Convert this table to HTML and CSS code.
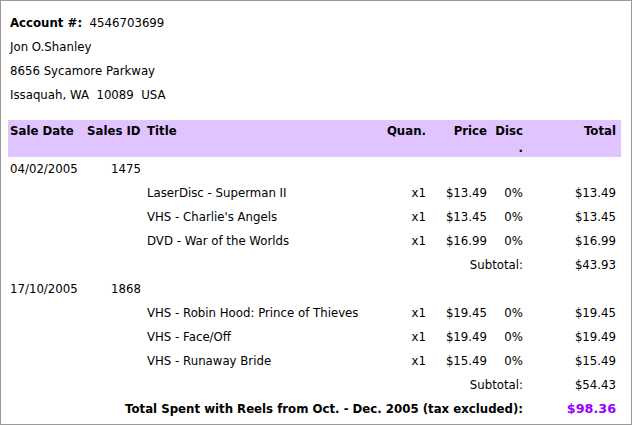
FILE: index.html
```html
<!DOCTYPE html>
<html>
<head>
<meta charset="utf-8">
<link rel="stylesheet" href="styles.css">
</head>
<body>
<div class="page">
  <div class="info">
    <div class="line"><span class="label">Account #:</span>&nbsp;&nbsp;4546703699</div>
    <div class="line">Jon O.Shanley</div>
    <div class="line">8656 Sycamore Parkway</div>
    <div class="line">Issaquah, WA&nbsp;&nbsp;10089&nbsp;&nbsp;USA</div>
  </div>
  <table class="sales">
    <colgroup>
      <col class="w-date"><col class="w-id"><col class="w-title"><col class="w-qty"><col class="w-price"><col class="w-disc"><col class="w-total">
    </colgroup>
    <thead>
      <tr>
        <th class="c-date">Sale Date</th>
        <th class="c-idh">Sales ID</th>
        <th class="c-title">Title</th>
        <th class="c-qty">Quan.</th>
        <th class="c-price">Price</th>
        <th class="c-disc">Disc<br>.</th>
        <th class="c-total">Total</th>
      </tr>
    </thead>
    <tbody>
      <tr><td class="c-date">04/02/2005</td><td class="c-id">1475</td><td></td><td></td><td></td><td></td><td></td></tr>
      <tr><td></td><td></td><td class="c-title">LaserDisc - Superman II</td><td class="c-qty">x1</td><td class="c-price">$13.49</td><td class="c-disc">0%</td><td class="c-total">$13.49</td></tr>
      <tr><td></td><td></td><td class="c-title">VHS - Charlie's Angels</td><td class="c-qty">x1</td><td class="c-price">$13.45</td><td class="c-disc">0%</td><td class="c-total">$13.45</td></tr>
      <tr><td></td><td></td><td class="c-title">DVD - War of the Worlds</td><td class="c-qty">x1</td><td class="c-price">$16.99</td><td class="c-disc">0%</td><td class="c-total">$16.99</td></tr>
      <tr><td></td><td></td><td colspan="4" class="c-disc">Subtotal:</td><td class="c-total">$43.93</td></tr>
      <tr><td class="c-date">17/10/2005</td><td class="c-id">1868</td><td></td><td></td><td></td><td></td><td></td></tr>
      <tr><td></td><td></td><td class="c-title">VHS - Robin Hood: Prince of Thieves</td><td class="c-qty">x1</td><td class="c-price">$19.45</td><td class="c-disc">0%</td><td class="c-total">$19.45</td></tr>
      <tr><td></td><td></td><td class="c-title">VHS - Face/Off</td><td class="c-qty">x1</td><td class="c-price">$19.49</td><td class="c-disc">0%</td><td class="c-total">$19.49</td></tr>
      <tr><td></td><td></td><td class="c-title">VHS - Runaway Bride</td><td class="c-qty">x1</td><td class="c-price">$15.49</td><td class="c-disc">0%</td><td class="c-total">$15.49</td></tr>
      <tr><td></td><td></td><td colspan="4" class="c-disc">Subtotal:</td><td class="c-total">$54.43</td></tr>
      <tr class="grand"><td colspan="6" class="c-disc">Total Spent with Reels from Oct. - Dec. 2005 (tax excluded):</td><td class="c-total grand-amt">$98.36</td></tr>
    </tbody>
  </table>
</div>
</body>
</html>
```
FILE: styles.css
```css
html, body {
  margin: 0;
  padding: 0;
  background: #fff;
}
body {
  font-family: "DejaVu Sans", Verdana, sans-serif;
  font-size: 11.75px;
  color: #000;
}
.page {
  box-sizing: border-box;
  width: 632px;
  height: 425px;
  border: 1px solid #999;
  padding: 10px 10px 0 7px;
}
.info {
  margin-left: 2px;
  margin-bottom: 13px;
}
.line {
  line-height: 24px;
  height: 24px;
  white-space: nowrap;
}
.label {
  font-weight: bold;
}
.sales {
  width: 613px;
  table-layout: fixed;
  border-collapse: collapse;
  border-spacing: 0;
}
.w-date { width: 77px; }
.w-id { width: 60px; }
.w-title { width: 238px; }
.w-qty { width: 46px; }
.w-price { width: 61px; }
.w-disc { width: 35px; }
.w-total { width: 96px; }
.sales th {
  background: #e0c4ff;
  font-weight: bold;
  line-height: 17px;
  height: 34px;
  padding: 3px 0 0 0;
  vertical-align: top;
  white-space: nowrap;
}
.sales td {
  height: 24px;
  line-height: 24px;
  padding: 0;
  vertical-align: middle;
  white-space: nowrap;
}
.c-date { text-align: left; padding-left: 2px !important; }
.c-idh { text-align: left; padding-left: 2px !important; }
.c-id { text-align: right; padding-right: 4px !important; }
.c-title { text-align: left; padding-left: 2px !important; }
.c-qty { text-align: right; padding-right: 3px !important; }
.c-price { text-align: right; padding-right: 3px !important; }
.c-disc { text-align: right; padding-right: 2px !important; }
.c-total { text-align: right; padding-right: 5px !important; }
.grand td {
  font-weight: bold;
}
.grand-amt {
  color: #9900ff;
  font-size: 12.75px;
}
```
